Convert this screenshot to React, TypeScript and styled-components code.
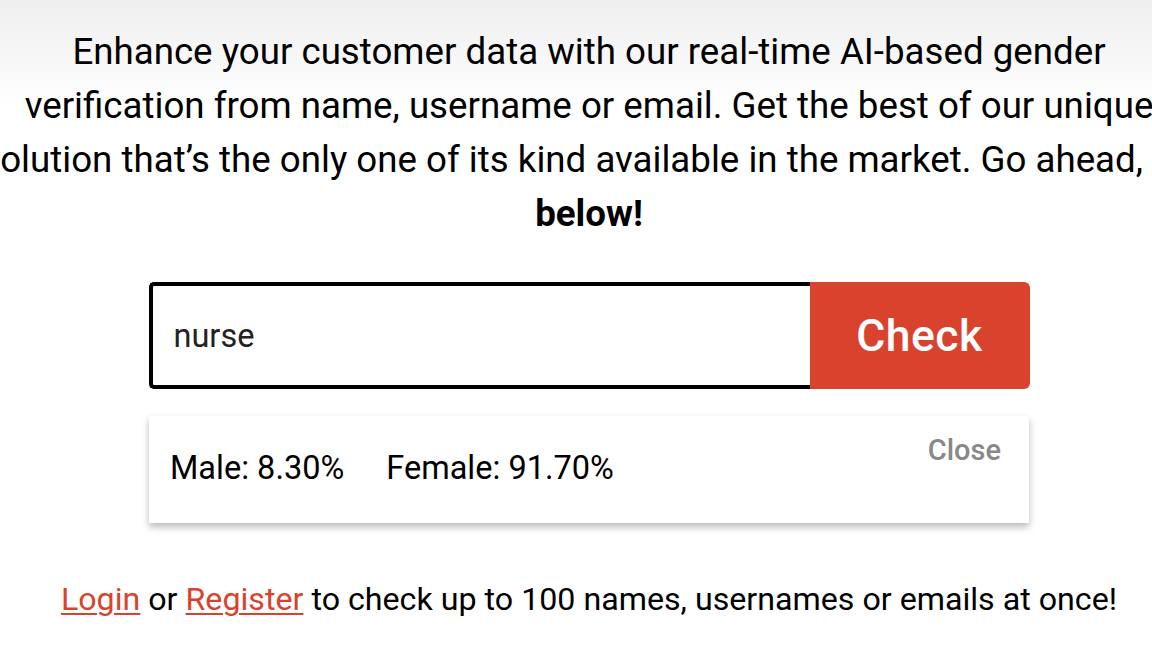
import React from 'react';
import styled, { createGlobalStyle } from 'styled-components';

const GlobalStyle = createGlobalStyle`
  html, body {
    margin: 0;
    padding: 0;
    overflow: hidden;
    background: #ffffff;
  }
  body {
    font-family: Roboto, "Liberation Sans", Arial, sans-serif;
    color: #000;
  }
`;

// Page holds the whole demo block; content is centred a little right of the viewport middle.
export default function App() {
  return (
    <>
      <GlobalStyle />
      <Page>
        <Intro>
          Enhance your customer data with our real-time AI-based gender
          <br />
          verification from name, username or email. Get the best of our unique
          <br />
          solution that’s the only one of its kind available in the market. Go ahead, <b>try</b>
          <br />
          <b>below!</b>
        </Intro>

        <CheckForm onSubmit={(e) => e.preventDefault()}>
          <NameInput defaultValue="nurse" />
          <CheckButton type="submit">Check</CheckButton>
        </CheckForm>

        <ResultCard>
          <ResultValues>
            <ResultValue>Male: 8.30%</ResultValue>
            <ResultValue>Female: 91.70%</ResultValue>
          </ResultValues>
          <CloseButton type="button">Close</CloseButton>
        </ResultCard>

        <Footnote>
          <TextLink href="#">Login</TextLink> or <TextLink href="#">Register</TextLink> to check up to 100
          names, usernames or emails at once!
        </Footnote>
      </Page>
    </>
  );
}

const Page = styled.div`
  min-height: 671px;
  padding-left: 26px;
  box-sizing: border-box;
  background: linear-gradient(to bottom, #efefef 0px, #ffffff 110px);

  display: flex;
  flex-flow: column nowrap;
  align-items: center;
`;

const Intro = styled.p`
  flex-shrink: 0;
  width: 1300px;
  margin: 25px 0 0 0;

  font-size: 36.7px;
  line-height: 54px;
  text-align: center;
  white-space: nowrap;

  b {
    font-weight: 700;
  }
`;

const CheckForm = styled.form`
  width: 881px;
  height: 107px;
  margin-top: 41px;

  display: flex;
  flex-flow: row nowrap;
  align-items: center;
`;

const NameInput = styled.input`
  box-sizing: border-box;
  flex-grow: 1;
  height: 107px;
  margin: 0;
  padding: 0 21px;
  border: 4px solid #000;
  border-right: none;
  border-radius: 5px 0 0 5px;
  outline: none;
  background: #fff;

  font-family: Roboto, "Liberation Sans", Arial, sans-serif;
  font-size: 32.5px;
  color: #222;
`;

const CheckButton = styled.button`
  box-sizing: border-box;
  width: 220px;
  height: 107px;
  margin: 0;
  border: none;
  border-radius: 0 6px 6px 0;
  background: #d9432d;
  cursor: pointer;

  font-family: Roboto, "Liberation Sans", Arial, sans-serif;
  font-size: 44.5px;
  font-weight: 500;
  letter-spacing: 0.5px;
  color: #fff;
`;

const ResultCard = styled.div`
  box-sizing: border-box;
  width: 880px;
  height: 107px;
  margin-top: 27px;
  padding: 18px 28px 0 21px;
  background: #fff;
  box-shadow: 0 4px 7px rgba(0, 0, 0, 0.28);

  display: flex;
  flex-flow: row nowrap;
  justify-content: space-between;
  align-items: flex-start;
`;

const ResultValues = styled.div`
  padding-top: 16px;

  display: flex;
  flex-flow: row nowrap;
  gap: 42px;
`;

const ResultValue = styled.span`
  font-size: 32.5px;
  line-height: 36px;
`;

const CloseButton = styled.button`
  margin: 0;
  padding: 0;
  border: none;
  background: none;
  cursor: pointer;

  font-family: Roboto, "Liberation Sans", Arial, sans-serif;
  font-size: 29px;
  font-weight: 500;
  line-height: 32px;
  color: #888;
`;

const Footnote = styled.p`
  flex-shrink: 0;
  margin: 56px 0 0 0;
  white-space: nowrap;

  font-size: 32.2px;
  line-height: 40px;
  text-align: center;
`;

const TextLink = styled.a`
  color: #d9432d;
  text-decoration: underline;
  text-underline-offset: 3px;
  text-decoration-thickness: 2px;
`;
